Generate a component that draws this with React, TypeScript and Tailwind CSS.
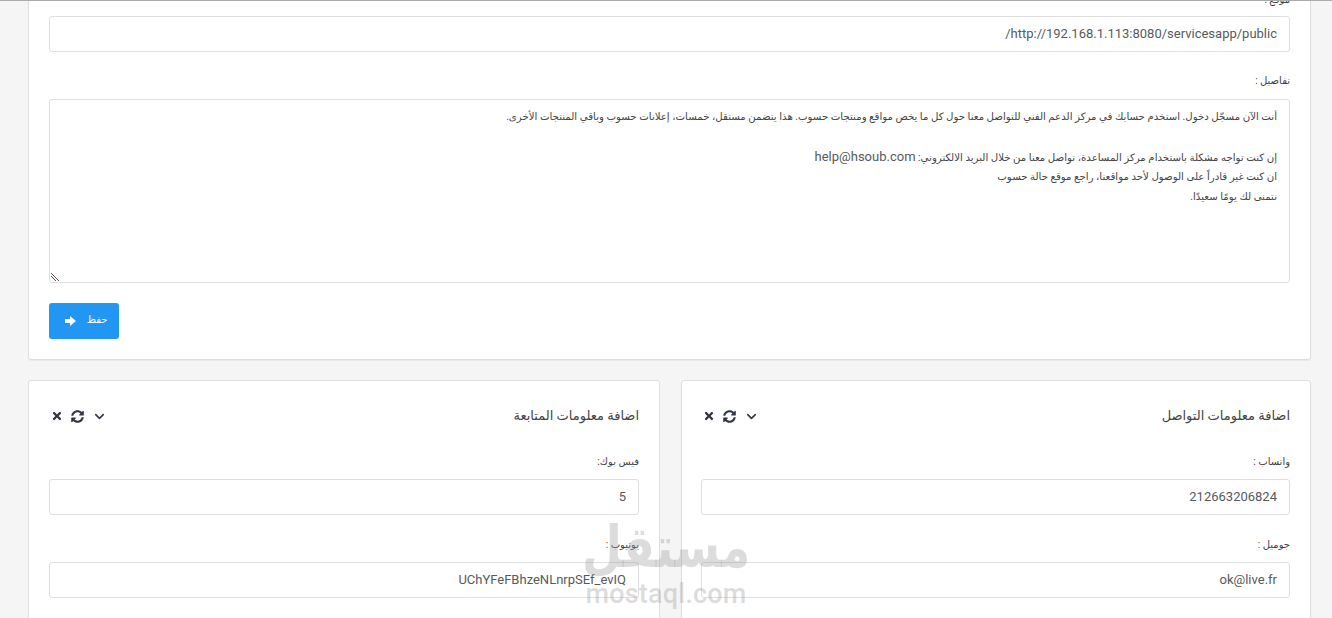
import { FaSyncAlt, FaTimes } from 'react-icons/fa'
import { ChevronDown } from 'lucide-react'

const font = "font-['Roboto','Liberation_Sans','DejaVu_Sans',sans-serif]"

const details = [
  'أنت الآن مسجّل دخول. استخدم حسابك في مركز الدعم الفني للتواصل معنا حول كل ما يخص مواقع ومنتجات حسوب. هذا يتضمن مستقل، خمسات، إعلانات حسوب وباقي المنتجات الأخرى.',
  '',
  'إن كنت تواجه مشكلة باستخدام مركز المساعدة، تواصل معنا من خلال البريد الالكتروني: ',
  'ان كنت غير قادراً على الوصول لأحد مواقعنا، راجع موقع حالة حسوب',
  'نتمنى لك يومًا سعيدًا.',
]

function Field({ label, value }: { label: string; value: string }) {
  return (
    <div className="mb-[20px]">
      <label className="mb-[9px] block h-[18px] pt-[1px] text-[10px] leading-[18px] text-[#3f3f3f]">{label}</label>
      <div className="flex h-[36px] items-center rounded-[3px] border border-[#dfdfdf] bg-white px-[12px] text-[13px] text-[#565a60]">
        {value}
      </div>
    </div>
  )
}

function PanelCard({ title, fields, className }: { title: string; fields: { label: string; value: string }[]; className: string }) {
  return (
    <section className={`min-w-0 rounded-[3px] border border-[#dedede] bg-white pb-[40px] pr-[20px] shadow-[0_1px_1px_rgba(0,0,0,0.05)] ${className}`}>
      <div className="flex h-[70px] items-center justify-between">
        <h3 className="text-[13px] font-normal text-[#444]">{title}</h3>
        <div dir="ltr" className="flex flex-row-reverse items-center gap-[8px] pl-[2px] text-[#2f3542]">
          <ChevronDown size={15} strokeWidth={2.5} />
          <FaSyncAlt size={13} />
          <FaTimes size={12} />
        </div>
      </div>
      <div className="pt-[1px]">
        {fields.map((f) => (
          <Field key={f.label} {...f} />
        ))}
      </div>
    </section>
  )
}

export default function App() {
  return (
    <div dir="rtl" className={`relative h-[618px] w-[1332px] overflow-hidden border-t border-[#ababab] bg-[#f5f5f5] ${font}`}>
      <div className="mt-[-13px] pl-[28px] pr-[21px]">
        <section className="rounded-[3px] border border-[#dedede] bg-white px-[20px] pb-[20px] shadow-[0_1px_1px_rgba(0,0,0,0.05)]">
          <div className="h-[27px] pt-[2px] text-[10px] leading-[18px] text-[#3f3f3f]">موقع :</div>
          <div className="flex h-[36px] items-center rounded-[3px] border border-[#dfdfdf] px-[12px] text-[13px] text-[#565a60]">
            http://192.168.1.113:8080/servicesapp/public/
          </div>
          <label className="mb-[9px] mt-[20px] block h-[18px] text-[10px] leading-[18px] text-[#3f3f3f]">تفاصيل :</label>
          <div className="relative h-[184px] rounded-[3px] border border-[#dfdfdf] px-[12px] py-[7px] text-[10.2px] leading-[20px] text-[#444]">
            {details.map((line, i) => (
              <div key={i} className="h-[20px] whitespace-nowrap">
                {line}
                {i === 2 && <span className="text-[13px] text-[#565a60]">help@hsoub.com</span>}
              </div>
            ))}
            <svg className="absolute bottom-0 left-0" width="10" height="10" viewBox="0 0 10 10" fill="none" stroke="#6b4a5a">
              <path d="M1 1 9 9M1 4 6 9" />
            </svg>
          </div>
          <button className="mr-auto mt-[20px] flex h-[36px] w-[70px] items-center justify-center gap-[11px] rounded-[3px] bg-[#2196f3] pl-[4px] text-[10px] text-white">
            <span className="-mt-[3px]">حفظ</span>
            <svg className="-mt-[1px]" width="11" height="10" viewBox="0 0 11 10" fill="white">
              <path d="M0 3h5V0l6 5-6 5V7H0z" />
            </svg>
          </button>
        </section>

        <div className="mt-[20px] flex gap-[21px]">
          <PanelCard
            className="flex-1 pl-[19px]"
            title="اضافة معلومات التواصل"
            fields={[
              { label: 'واتساب :', value: '212663206824' },
              { label: 'جوميل :', value: 'ok@live.fr' },
            ]}
          />
          <PanelCard
            className="w-[632px] shrink-0 pl-[20px]"
            title="اضافة معلومات المتابعة"
            fields={[
              { label: 'فيس بوك:', value: '5' },
              { label: 'يوتيوب :', value: 'UChYFeFBhzeNLnrpSEf_evIQ' },
            ]}
          />
        </div>
      </div>

      <div
        dir="ltr"
        className="pointer-events-none absolute left-[585px] top-[526px] flex w-[162px] flex-col items-center text-[#9a9a9a]/35"
      >
        <span className="origin-bottom scale-y-125 text-[46px] font-bold leading-[54px]" dir="rtl">مستقل</span>
        <span className="font-['Roboto',sans-serif] text-[27px] font-medium leading-[26px] tracking-[0.2px]">mostaql.com</span>
      </div>
    </div>
  )
}
